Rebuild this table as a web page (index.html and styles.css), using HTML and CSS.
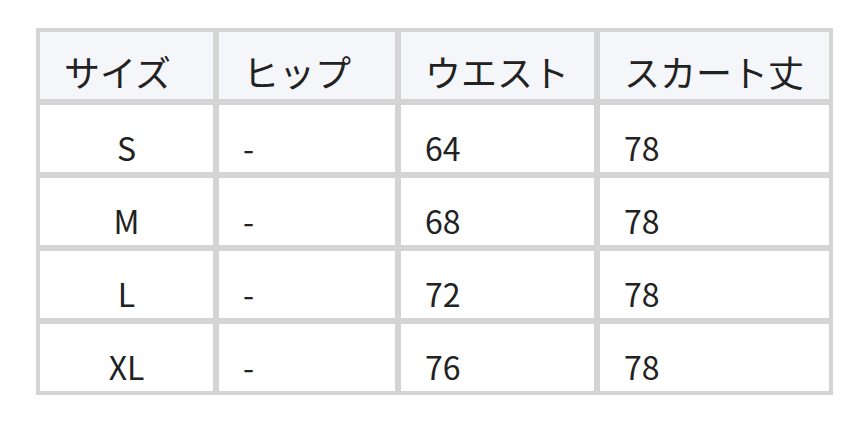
FILE: index.html
```html
<!DOCTYPE html>
<html lang="ja">
<head>
<meta charset="utf-8">
<link rel="stylesheet" href="styles.css">
</head>
<body>
<table class="size-table">
  <thead>
    <tr>
      <th class="c1">サイズ</th>
      <th class="c2">ヒップ</th>
      <th class="c3">ウエスト</th>
      <th class="c4">スカート丈</th>
    </tr>
  </thead>
  <tbody>
    <tr><td class="center">S</td><td>-</td><td>64</td><td>78</td></tr>
    <tr><td class="center">M</td><td>-</td><td>68</td><td>78</td></tr>
    <tr><td class="center">L</td><td>-</td><td>72</td><td>78</td></tr>
    <tr><td class="center">XL</td><td>-</td><td>76</td><td>78</td></tr>
  </tbody>
</table>
</body>
</html>
```
FILE: styles.css
```css
html, body {
  margin: 0;
  padding: 0;
  background: #ffffff;
}
body {
  padding: 28px 0 0 36px;
  font-family: "Noto Sans CJK JP", "Noto Sans", sans-serif;
  color: #222222;
}
.size-table {
  border-collapse: separate;
  border-spacing: 0;
  border: 1px solid #d4d4d4;
  table-layout: fixed;
  width: 797px;
}
.size-table th,
.size-table td {
  border: 3px solid #d4d4d4;
  font-weight: 400;
  line-height: 40px;
  height: 73px;
  box-sizing: border-box;
  padding: 22px 24px 2px;
  text-align: left;
  vertical-align: top;
  white-space: nowrap;
  overflow: hidden;
}
.size-table th {
  background: #f5f6fa;
  font-size: 36px;
  padding-top: 19px;
}
.size-table td {
  background: #ffffff;
  font-size: 32px;
}
.c1 { width: 179px; }
.c2 { width: 182px; }
.c3 { width: 199px; }
.c4 { width: 235px; }
.size-table td.center {
  text-align: center;
}
```
